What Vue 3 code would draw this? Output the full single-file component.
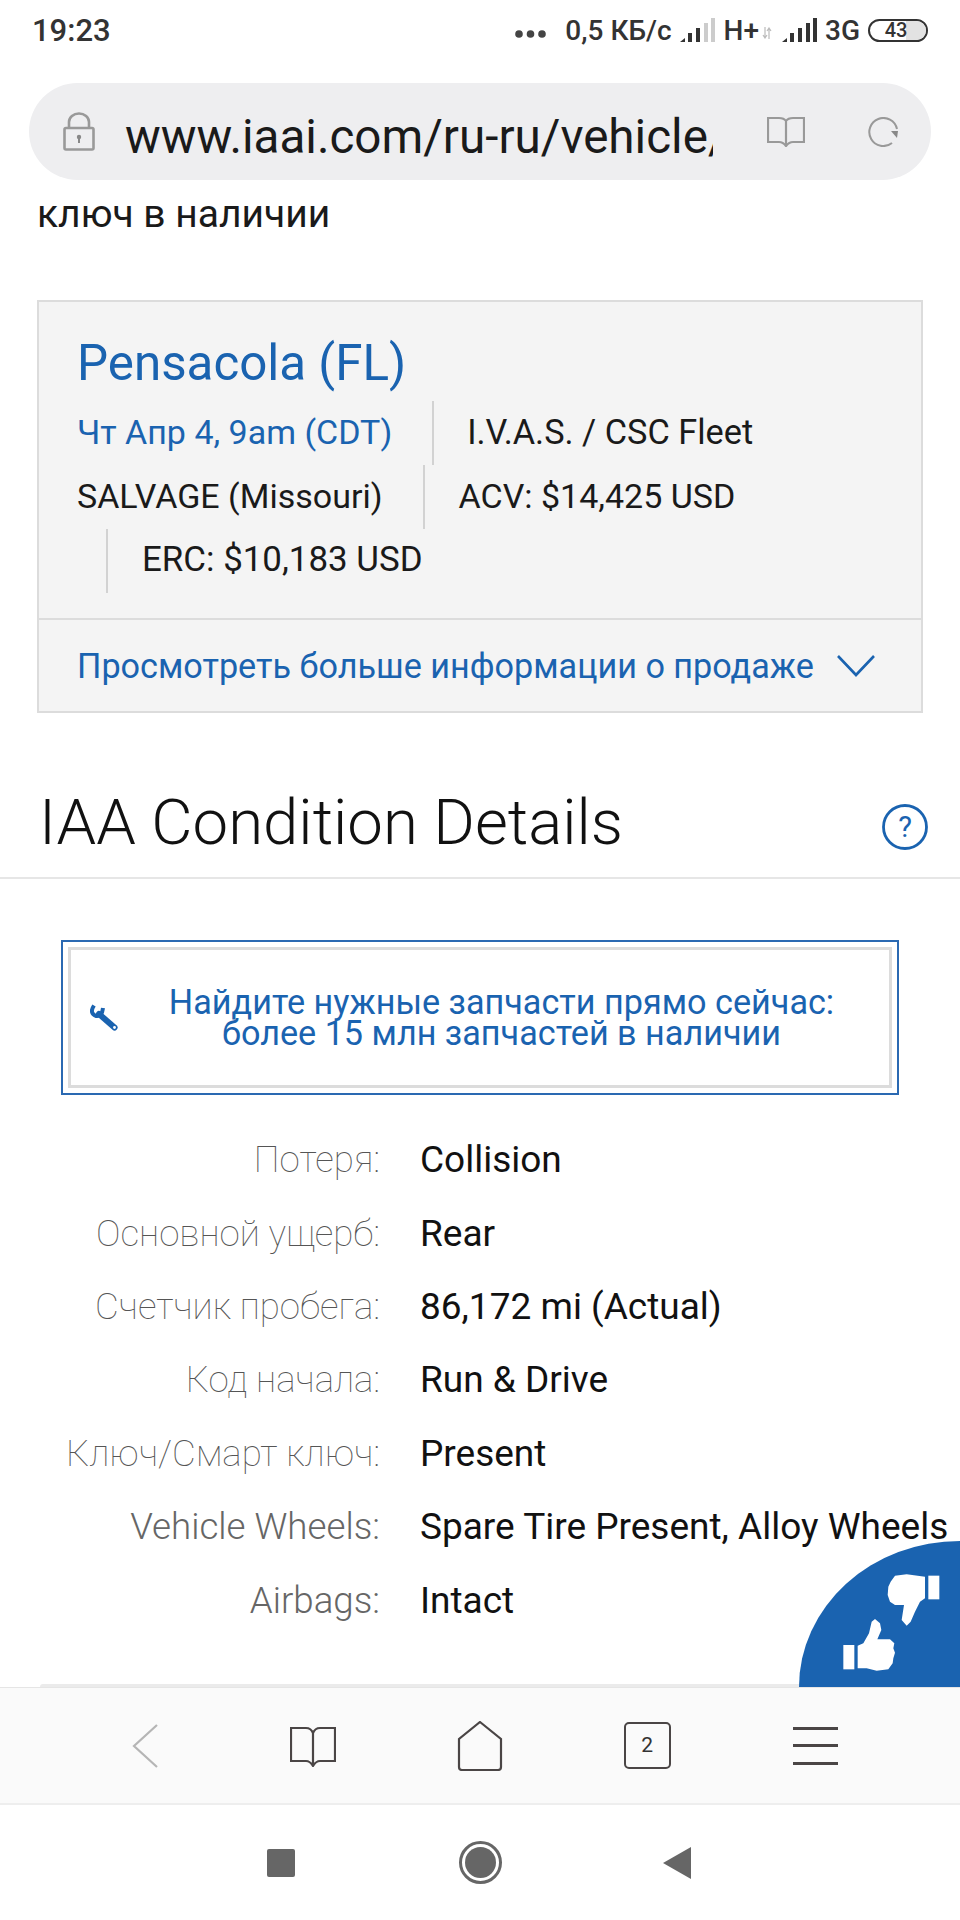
<script setup>
const details = [
  { label: "Потеря:", value: "Collision", thin: true },
  { label: "Основной ущерб:", value: "Rear", thin: true },
  { label: "Счетчик пробега:", value: "86,172 mi (Actual)", thin: true },
  { label: "Код начала:", value: "Run & Drive", thin: true },
  { label: "Ключ/Смарт ключ:", value: "Present", thin: true },
  { label: "Vehicle Wheels:", value: "Spare Tire Present, Alloy Wheels" },
  { label: "Airbags:", value: "Intact" },
];
</script>

<template>
  <div class="phone">
    <div class="status-bar">
      <span class="time">19:23</span>
      <div class="status-right">
        <svg class="dots" width="31" height="8" viewBox="0 0 31 8">
          <circle cx="4" cy="4" r="3.8" /><circle cx="15.5" cy="4" r="3.8" /><circle cx="27" cy="4" r="3.8" />
        </svg>
        <span class="speed">0,5 КБ/с</span>
        <svg class="signal" width="35" height="26" viewBox="0 0 35 26">
          <path d="M0 25 L5 21 V25 Z" fill="#333" />
          <rect x="8" y="16" width="4" height="9" fill="#333" />
          <rect x="16" y="11" width="4" height="14" fill="#333" />
          <rect x="24" y="6" width="4" height="19" fill="#ccc" />
          <rect x="31" y="1" width="4" height="24" fill="#ccc" />
        </svg>
        <span class="net">H+</span>
        <svg class="arrows" width="10" height="12" viewBox="0 0 10 12">
          <path d="M3 0 V11 M1 8 L3 11 L5 8 M7 12 V1 M5 4 L7 1 L9 4" fill="none" stroke="#bbb" stroke-width="1.2" />
        </svg>
        <svg class="signal" width="35" height="26" viewBox="0 0 35 26">
          <path d="M0 25 L5 21 V25 Z" fill="#333" />
          <rect x="8" y="16" width="4" height="9" fill="#333" />
          <rect x="16" y="11" width="4" height="14" fill="#333" />
          <rect x="24" y="6" width="4" height="19" fill="#333" />
          <rect x="31" y="1" width="4" height="24" fill="#333" />
        </svg>
        <span class="net net-last">3G</span>
        <div class="battery">
          <div class="battery-fill"></div>
          <span class="battery-num">43</span>
        </div>
      </div>
    </div>

    <div class="url-wrap">
      <div class="url-bar">
        <svg class="lock" width="32" height="39" viewBox="0 0 32 39" fill="none" stroke="#999" stroke-width="2.6">
          <path d="M6 16 V10 a10 8.5 0 0 1 20 0 V16" />
          <rect x="1.5" y="16" width="29" height="21.5" rx="1.5" />
          <circle cx="16" cy="25" r="2.2" fill="#888" stroke="none" />
          <rect x="15" y="25" width="2" height="6" fill="#888" stroke="none" />
        </svg>
        <div class="url-text">www.iaai.com/ru-ru/vehicle/</div>
        <svg class="url-book" width="38" height="31" viewBox="0 0 38 31" fill="none" stroke="#999" stroke-width="2.2">
          <path d="M1 2 H12 Q17 2 19 5 Q21 2 26 2 H37 V26 H26 Q22 26 19 30 Q16 26 12 26 H1 Z M19 5 V30" />
        </svg>
        <svg class="url-reload" width="34" height="30" viewBox="0 0 34 30" fill="none" stroke="#999" stroke-width="2">
          <path d="M31 12 A14 14 0 1 0 26 26" />
          <path d="M25 14 H32 L31 21 Z" fill="#888" stroke="none" />
        </svg>
      </div>
    </div>

    <main class="content">
      <p class="key-line">ключ в наличии</p>

      <section class="sale-card">
        <div class="sale-body">
          <h2 class="sale-title">Pensacola (FL)</h2>
          <div class="sale-row">
            <span class="sale-date">Чт Апр 4, 9am (CDT)</span>
            <span class="sale-item sale-item-first">I.V.A.S. / CSC Fleet</span>
          </div>
          <div class="sale-row">
            <span>SALVAGE (Missouri)</span>
            <span class="sale-item">ACV: $14,425 USD</span>
          </div>
          <div class="sale-row">
            <span class="sale-item sale-item-wrap">ERC: $10,183 USD</span>
          </div>
        </div>
        <div class="sale-more">
          <span>Просмотреть больше информации о продаже</span>
          <svg width="38" height="22" viewBox="0 0 38 22" fill="none" stroke="#1a63b0" stroke-width="2.6">
            <path d="M1 1 L19 20 L37 1" />
          </svg>
        </div>
      </section>

      <div class="condition-head">
        <h1>IAA Condition Details</h1>
        <svg class="help" width="46" height="46" viewBox="0 0 46 46">
          <circle cx="23" cy="23" r="21.5" fill="none" stroke="#1a63b0" stroke-width="2.8" />
          <text x="23" y="33" text-anchor="middle" class="help-mark">?</text>
        </svg>
      </div>

      <div class="parts-banner">
        <div class="parts-inner">
          <svg class="wrench" width="28" height="27" viewBox="0 0 28 27">
            <path d="M4 1.5 Q-1 9 6 12 Q12 13 13 4" fill="none" stroke="#1a63b0" stroke-width="4" />
            <path d="M9 10 L24.5 23.5" stroke="#1a63b0" stroke-width="6" stroke-linecap="round" />
            <circle cx="24.5" cy="23.5" r="1.4" fill="#fff" />
          </svg>
          <div class="parts-text">Найдите нужные запчасти прямо сейчас:<br />более 15 млн запчастей в наличии</div>
        </div>
      </div>

      <dl class="details">
        <div class="detail-row" v-for="row in details" :key="row.label">
          <dt :class="{ thin: row.thin }">{{ row.label }}</dt>
          <dd>{{ row.value }}</dd>
        </div>
      </dl>

      <div class="next-card"></div>

      <div class="feedback">
        <svg width="240" height="220" viewBox="0 0 720 660" fill="#fff">
          <rect x="370" y="495" width="33" height="73" />
          <path d="M413 497 L430 490 L447 460 L455 425 L465 417 L480 430 L484 450 L472 478 L510 478 L523 490 L520 505 L525 518 L520 535 L518 550 L505 568 L470 572 L440 565 L413 565 Z" />
          <rect x="625" y="287" width="33" height="71" />
          <path d="M615 290 L560 283 L525 287 L512 305 L505 320 L503 345 L510 365 L525 375 L552 375 L545 420 L560 437 L572 425 L585 395 L600 365 L615 355 Z" />
        </svg>
      </div>
    </main>

    <div class="toolbar">
      <svg width="26" height="44" viewBox="0 0 26 44" fill="none" stroke="#b5b5b5" stroke-width="2.2"><path d="M25 1 L2 22 L25 43" /></svg>
      <svg class="tool-book" width="46" height="42" viewBox="0 0 46 42" fill="none" stroke="#4a4545" stroke-width="2.2"><path d="M1 3 H16 Q21 3 23 8 Q25 3 30 3 H45 V36 H30 Q26 36 23 41 Q20 36 16 36 H1 Z M23 8 V41" /></svg>
      <svg width="46" height="50" viewBox="0 0 46 50" fill="none" stroke="#4a4545" stroke-width="2.2"><path d="M23 1 L44 18 V46 Q44 49 41 49 H5 Q2 49 2 46 V18 Z" /></svg>
      <div class="tabs-count">2</div>
      <div class="menu-icon"><i></i><i></i><i></i></div>
    </div>

    <div class="nav-bar">
      <div class="nav-square"></div>
      <div class="nav-circle"><div></div></div>
      <svg width="30" height="32" viewBox="0 0 30 32"><path d="M29 0 V32 L1 16 Z" fill="#666" /></svg>
    </div>
  </div>
</template>

<style scoped>
.phone {
  width: 960px;
  height: 1920px;
  display: flex;
  flex-direction: column;
  overflow: hidden;
  background: #fff;
  font-family: Roboto, "Liberation Sans", sans-serif;
  color: #1a1a1a;
}

.status-bar {
  height: 60px;
  flex: none;
  display: flex;
  align-items: center;
  justify-content: space-between;
  padding: 0 32px;
  color: #333;
}

.time {
  font-size: 31px;
  font-weight: 500;
}

.status-right {
  display: flex;
  align-items: center;
}

.dots {
  fill: #444;
  margin-right: 19px;
  margin-top: 8px;
}

.speed,
.net {
  font-size: 28px;
  font-weight: 500;
}

.speed {
  margin-right: 8px;
}

.net {
  margin: 0 3px 0 9px;
}

.net-last {
  margin: 0 0 0 8px;
}

.arrows {
  margin-right: 10px;
  margin-top: 6px;
}

.battery {
  position: relative;
  width: 60px;
  height: 23px;
  margin-left: 8px;
  border: 2px solid #333;
  border-radius: 12px;
  box-sizing: border-box;
  overflow: hidden;
  display: flex;
  align-items: center;
  justify-content: center;
}

.battery-fill {
  position: absolute;
  right: 0;
  top: 0;
  bottom: 0;
  width: 35%;
  background: #e2e2e2;
}

.battery-num {
  position: relative;
  font-size: 20px;
  font-weight: 500;
  padding-right: 4px;
}

.url-wrap {
  flex: none;
  padding: 23px 29px 0;
}

.url-bar {
  height: 97px;
  display: flex;
  align-items: center;
  background: #eeeef0;
  border-radius: 49px;
  padding-left: 34px;
}

.lock {
  flex: none;
}

.url-text {
  width: 588px;
  margin: 10px 0 0 30px;
  overflow: hidden;
  white-space: nowrap;
  font-size: 47.6px;
}

.url-book {
  margin-left: 54px;
}

.url-reload {
  margin-left: 61px;
}

.content {
  position: relative;
  flex: 1;
  min-height: 0;
  overflow: hidden;
}

.key-line {
  margin: 13px 0 0 37px;
  font-size: 39px;
  line-height: 42px;
}

.sale-card {
  margin: 65px 37px 0 37px;
  border: 2px solid #dcdcdc;
  background: #f4f4f4;
}

.sale-body {
  padding: 30px 38px 24px;
  height: 318px;
  box-sizing: border-box;
  border-bottom: 2px solid #dcdcdc;
}

.sale-title {
  margin: 0 0 7px;
  font-size: 49.3px;
  font-weight: 400;
  line-height: 62px;
  color: #1a63b0;
}

.sale-row {
  height: 64px;
  display: flex;
  align-items: center;
  font-size: 34px;
}

.sale-row span {
  padding-bottom: 3px;
  box-sizing: border-box;
}

.sale-date {
  color: #1a63b0;
}

.sale-item {
  display: flex;
  align-items: center;
  height: 64px;
  margin-left: 40px;
  padding-left: 34px;
  border-left: 2px solid #d2d2d2;
}

.sale-item-first {
  padding-left: 33px;
  font-size: 34.3px;
}

.sale-item-wrap {
  margin-left: 29px;
  font-size: 34.9px;
}

.sale-more {
  height: 91px;
  display: flex;
  align-items: center;
  padding-left: 38px;
  font-size: 34.2px;
  color: #1a63b0;
}

.sale-more svg {
  margin-left: 23px;
}

.condition-head {
  height: 166px;
  box-sizing: border-box;
  display: flex;
  align-items: center;
  justify-content: space-between;
  padding: 54px 32px 0 39px;
  border-bottom: 2px solid #e6e6e6;
}

.condition-head h1 {
  margin: 0;
  font-size: 63.5px;
  font-weight: 300;
  color: #111;
}

.help {
  margin-top: 10px;
}

.help-mark {
  font-size: 29px;
  fill: #1a63b0;
}

.parts-banner {
  margin: 61px 61px 0;
  padding: 5px;
  border: 2px solid #2a69b2;
}

.parts-inner {
  height: 141px;
  box-sizing: border-box;
  display: flex;
  align-items: center;
  border: 3px solid #dcdcdc;
  padding-left: 19px;
}

.parts-text {
  flex: 1;
  text-align: center;
  font-size: 34.2px;
  line-height: 31px;
  color: #1a63b0;
  padding-right: 4px;
}

.details {
  margin: 28px 0 0;
}

.detail-row {
  height: 73.4px;
  display: flex;
  align-items: center;
  font-size: 37px;
}

.detail-row dt {
  width: 380px;
  text-align: right;
  font-size: 36.7px;
  font-weight: 300;
  color: #666;
}

.detail-row dt.thin {
  font-weight: 100;
  color: #555;
}

.detail-row dd {
  margin: 0 0 0 40px;
  white-space: nowrap;
  color: #111;
}

.next-card {
  position: absolute;
  left: 40px;
  right: 0;
  bottom: 0;
  height: 3px;
  background: #ebebeb;
  border-radius: 6px 0 0 0;
}

.feedback {
  position: absolute;
  right: 0;
  bottom: 0;
  width: 161px;
  height: 146px;
  overflow: hidden;
  background: #1a63b0;
  border-top-left-radius: 161px 146px;
}

.feedback svg {
  position: absolute;
  right: 0;
  bottom: -13px;
}

.toolbar {
  flex: none;
  height: 118px;
  box-sizing: border-box;
  display: grid;
  grid-template-columns: repeat(5, 167.5px);
  justify-items: center;
  align-items: center;
  padding-left: 61px;
  background: #fafafa;
  border-top: 1px solid #e5e5e5;
  border-bottom: 2px solid #eee;
}

.tool-book {
  margin-left: 2px;
}

.tabs-count {
  width: 47px;
  height: 47px;
  box-sizing: border-box;
  border: 2px solid #4a4545;
  border-radius: 5px;
  text-align: center;
  font-size: 21px;
  line-height: 43px;
  color: #333;
}

.menu-icon {
  width: 45px;
  display: flex;
  flex-direction: column;
  gap: 14.5px;
  margin-left: 2px;
}

.menu-icon i {
  height: 3px;
  background: #4a4545;
}

.nav-bar {
  flex: none;
  height: 115px;
  display: flex;
  align-items: center;
  padding-left: 267px;
  background: #fff;
}

.nav-square {
  width: 28px;
  height: 28px;
  margin-right: 164px;
  background: #666;
  border-radius: 2px;
}

.nav-circle {
  width: 43px;
  height: 43px;
  margin-right: 160px;
  box-sizing: border-box;
  border: 3px solid #666;
  border-radius: 50%;
  padding: 3px;
}

.nav-circle div {
  width: 100%;
  height: 100%;
  background: #666;
  border-radius: 50%;
}
</style>
